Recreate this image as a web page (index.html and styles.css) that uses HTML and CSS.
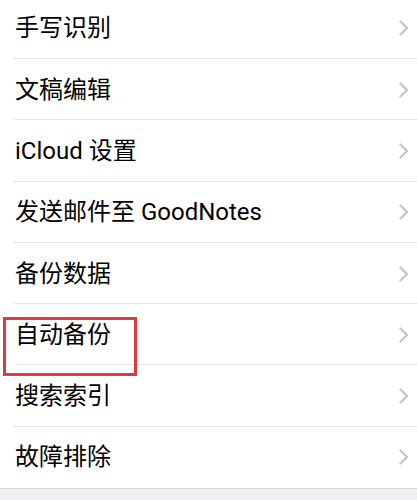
FILE: index.html
```html
<!DOCTYPE html>
<html lang="zh-CN">
<head>
<meta charset="utf-8">
<link rel="stylesheet" href="styles.css">
</head>
<body>
<div class="screen">
  <ul class="list">
    <li class="row"><span class="label">手写识别</span><svg class="chev" viewBox="0 0 10 16"><path d="M1.5 1.5 L8 8 L1.5 14.5"/></svg></li>
    <li class="row"><span class="label">文稿编辑</span><svg class="chev" viewBox="0 0 10 16"><path d="M1.5 1.5 L8 8 L1.5 14.5"/></svg></li>
    <li class="row"><span class="label">iCloud 设置</span><svg class="chev" viewBox="0 0 10 16"><path d="M1.5 1.5 L8 8 L1.5 14.5"/></svg></li>
    <li class="row"><span class="label">发送邮件至 GoodNotes</span><svg class="chev" viewBox="0 0 10 16"><path d="M1.5 1.5 L8 8 L1.5 14.5"/></svg></li>
    <li class="row"><span class="label">备份数据</span><svg class="chev" viewBox="0 0 10 16"><path d="M1.5 1.5 L8 8 L1.5 14.5"/></svg></li>
    <li class="row"><span class="label">自动备份</span><svg class="chev" viewBox="0 0 10 16"><path d="M1.5 1.5 L8 8 L1.5 14.5"/></svg></li>
    <li class="row"><span class="label">搜索索引</span><svg class="chev" viewBox="0 0 10 16"><path d="M1.5 1.5 L8 8 L1.5 14.5"/></svg></li>
    <li class="row last"><span class="label">故障排除</span><svg class="chev" viewBox="0 0 10 16"><path d="M1.5 1.5 L8 8 L1.5 14.5"/></svg></li>
  </ul>
  <div class="highlight"></div>
</div>
</body>
</html>
```
FILE: styles.css
```css
html, body {
  margin: 0;
  padding: 0;
  background: #efeff4;
}
.screen {
  position: relative;
  width: 417px;
  height: 500px;
  overflow: hidden;
  background: #efeff4;
  font-family: Roboto, "Noto Sans CJK SC", sans-serif;
}
.list {
  list-style: none;
  margin: -2.3px 0 0 0;
  padding: 0;
  background: #ffffff;
  border-bottom: 1px solid #d6d6da;
}
.row {
  position: relative;
  height: 61.3px;
  box-sizing: border-box;
  display: flex;
  align-items: center;
  justify-content: space-between;
  padding: 0 8px 0 15px;
}
.row::after {
  content: "";
  position: absolute;
  left: 14px;
  right: 0;
  bottom: 0;
  height: 1px;
  background: #e4e4e7;
}
.row.last::after {
  display: none;
}
.label {
  font-size: 24px;
  color: #000000;
  line-height: 1;
}
.chev {
  width: 10px;
  height: 16px;
  fill: none;
  stroke: #c5c5c9;
  stroke-width: 2.3;
  stroke-linecap: round;
  stroke-linejoin: round;
}
.highlight {
  position: absolute;
  left: 3px;
  top: 317px;
  width: 134px;
  height: 59px;
  box-sizing: border-box;
  border: 3px solid #e0393f;
}
```
